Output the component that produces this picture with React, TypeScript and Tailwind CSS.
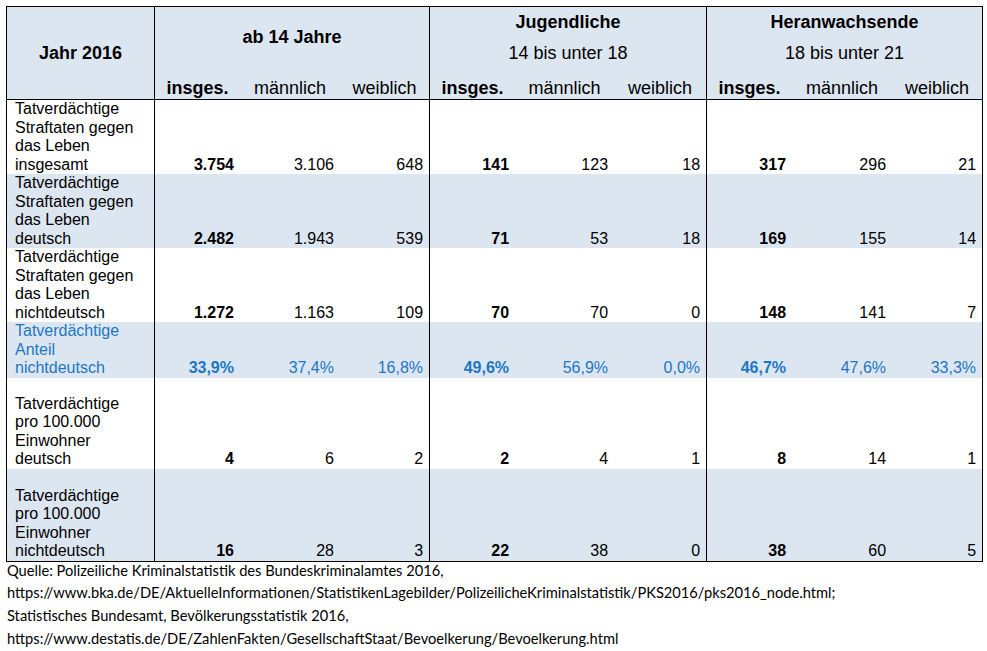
import { Fragment } from "react";

const groups = [
  { title: "ab 14 Jahre", sub: "" },
  { title: "Jugendliche", sub: "14 bis unter 18" },
  { title: "Heranwachsende", sub: "18 bis unter 21" },
];

const widths = [147, 86, 100, 89, 86, 99, 92, 86, 100, 90];

type Row = {
  label: string[];
  values: string[];
  height: number;
  shaded: boolean;
  blue?: boolean;
};

const rows: Row[] = [
  {
    label: ["Tatverdächtige", "Straftaten gegen", "das Leben", "insgesamt"],
    values: ["3.754", "3.106", "648", "141", "123", "18", "317", "296", "21"],
    height: 73,
    shaded: false,
  },
  {
    label: ["Tatverdächtige", "Straftaten gegen", "das Leben", "deutsch"],
    values: ["2.482", "1.943", "539", "71", "53", "18", "169", "155", "14"],
    height: 74,
    shaded: true,
  },
  {
    label: ["Tatverdächtige", "Straftaten gegen", "das Leben", "nichtdeutsch"],
    values: ["1.272", "1.163", "109", "70", "70", "0", "148", "141", "7"],
    height: 73,
    shaded: false,
  },
  {
    label: ["Tatverdächtige", "Anteil", "nichtdeutsch"],
    values: ["33,9%", "37,4%", "16,8%", "49,6%", "56,9%", "0,0%", "46,7%", "47,6%", "33,3%"],
    height: 55,
    shaded: true,
    blue: true,
  },
  {
    label: ["Tatverdächtige", "pro 100.000", "Einwohner", "deutsch"],
    values: ["4", "6", "2", "2", "4", "1", "8", "14", "1"],
    height: 91,
    shaded: false,
  },
  {
    label: ["Tatverdächtige", "pro 100.000", "Einwohner", "nichtdeutsch"],
    values: ["16", "28", "3", "22", "38", "0", "38", "60", "5"],
    height: 92,
    shaded: true,
  },
];

export default function App() {
  return (
    <div className="min-h-screen bg-white text-black [font-family:'Liberation_Sans',Arial,sans-serif]">
      <div className="ml-[6px] pt-[6px]">
        <div className="w-[977px] border border-black">
          <table className="table-fixed border-separate border-spacing-0 w-[975px]">
            <colgroup>
              {widths.map((w, i) => (
                <col key={i} style={{ width: w }} />
              ))}
            </colgroup>
            <thead className="bg-[#dce6f1] text-[18px] leading-[21px]">
              <tr className="h-[31px]">
                <th rowSpan={3} className="border-b border-black align-middle text-center font-bold">
                  Jahr 2016
                </th>
                {groups.map((g, i) => (
                  <th
                    key={g.title}
                    colSpan={3}
                    rowSpan={i === 0 ? 2 : 1}
                    className="border-l border-black align-middle text-center font-bold"
                  >
                    {g.title}
                  </th>
                ))}
              </tr>
              <tr className="h-[30px]">
                {groups.slice(1).map((g) => (
                  <th key={g.sub} colSpan={3} className="border-l border-black align-middle text-center font-normal">
                    {g.sub}
                  </th>
                ))}
              </tr>
              <tr className="h-[32px]">
                {groups.map((g) => (
                  <Fragment key={g.title}>
                    <th className="border-l border-b border-black align-bottom text-center font-bold">insges.</th>
                    <th className="border-b border-black align-bottom text-center font-normal">männlich</th>
                    <th className="border-b border-black align-bottom text-center font-normal">weiblich</th>
                  </Fragment>
                ))}
              </tr>
            </thead>
            <tbody className="text-[16px] leading-[18.5px]">
              {rows.map((row, r) => (
                <tr
                  key={r}
                  style={{ height: row.height }}
                  className={`${row.shaded ? "bg-[#dce6f1]" : "bg-white"} ${row.blue ? "text-[#1c77c3]" : "text-black"}`}
                >
                  <td className="align-bottom pl-[8px] p-0">
                    {row.label.map((l, i) => (
                      <div key={i}>{l}</div>
                    ))}
                  </td>
                  {row.values.map((v, i) => (
                    <td
                      key={i}
                      className={`align-bottom text-right pr-[6px] ${i % 3 === 0 ? "border-l border-black font-bold" : ""}`}
                    >
                      {v}
                    </td>
                  ))}
                </tr>
              ))}
            </tbody>
          </table>
        </div>
      </div>
      <div className="pl-[7px] -mt-[2px] text-[14.67px] leading-[22.7px] whitespace-nowrap [font-family:Lato,'Open_Sans',sans-serif]">
        <div>Quelle: Polizeiliche Kriminalstatistik des Bundeskriminalamtes 2016,</div>
        <div>
          https://www.bka.de/DE/AktuelleInformationen/StatistikenLagebilder/PolizeilicheKriminalstatistik/PKS2016/pks2016_node.html;
        </div>
        <div>Statistisches Bundesamt, Bevölkerungsstatistik 2016,</div>
        <div>https://www.destatis.de/DE/ZahlenFakten/GesellschaftStaat/Bevoelkerung/Bevoelkerung.html</div>
      </div>
    </div>
  );
}
